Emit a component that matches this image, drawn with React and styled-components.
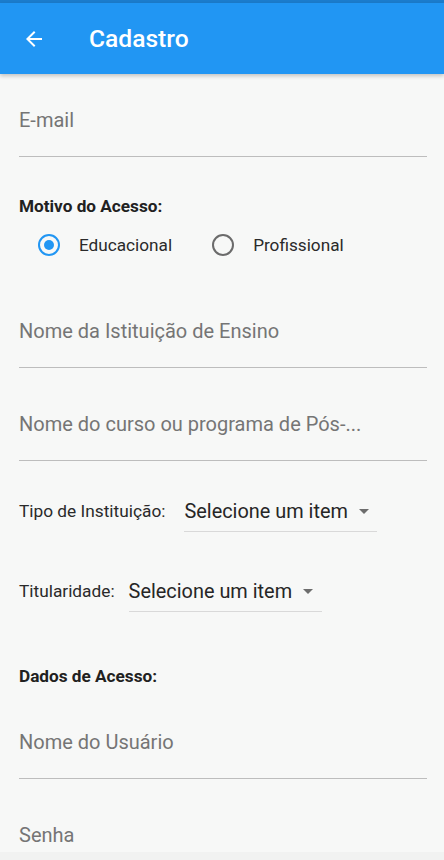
import React, { useState } from "react";
import styled, { createGlobalStyle } from "styled-components";

const GlobalStyle = createGlobalStyle`
  html, body {
    margin: 0;
    padding: 0;
    background: #f7f8f7;
    font-family: Roboto, "Noto Sans", sans-serif;
  }
`;

const Screen = styled.div`
  width: 444px;
  height: 860px;
  overflow: hidden;
  display: flex;
  flex-direction: column;
  background: #f7f8f7;
  position: relative;
`;

const StatusStrip = styled.div`
  height: 3px;
  flex-shrink: 0;
  background: #1b7ccc;
`;

const AppBar = styled.header`
  height: 71px;
  flex-shrink: 0;
  background: #2196f3;
  display: flex;
  align-items: center;
  padding-left: 22px;
  gap: 43px;
  box-shadow: 0 2px 4px rgba(0, 0, 0, 0.22);
  position: relative;
  z-index: 1;
`;

const Title = styled.h1`
  margin: 0;
  color: #ffffff;
  font-size: 24.6px;
  font-weight: 500;
`;

const Form = styled.div`
  flex: 1;
  padding: 0 17px 0 19px;
  display: flex;
  flex-direction: column;
`;

const Field = styled.div`
  height: ${(p) => p.h || 82}px;
  flex-shrink: 0;
  display: flex;
  flex-direction: column;
  justify-content: flex-end;
`;

const Placeholder = styled.div`
  font-size: 20px;
  color: #757575;
  line-height: 24px;
  padding-bottom: 24px;
  border-bottom: 1.5px solid #bdbdbd;
  white-space: nowrap;
`;

const SectionLabel = styled.div`
  font-size: 17.2px;
  font-weight: 700;
  color: #212121;
  margin-top: ${(p) => p.mt}px;
  line-height: 20px;
  flex-shrink: 0;
`;

const RadioRow = styled.div`
  display: flex;
  align-items: center;
  height: 22px;
  margin-top: 18px;
  padding-left: 19px;
  flex-shrink: 0;
`;

const RadioOption = styled.label`
  display: flex;
  align-items: center;
  gap: 19px;
  margin-right: 40px;
  font-size: 17.2px;
  color: #2a2a2a;
  cursor: pointer;
`;

const RadioCircle = styled.span`
  width: 18px;
  height: 18px;
  border-radius: 50%;
  border: 2px solid ${(p) => (p.checked ? "#2196f3" : "#6b6b6b")};
  display: flex;
  align-items: center;
  justify-content: center;

  &::after {
    content: "";
    width: 10px;
    height: 10px;
    border-radius: 50%;
    background: ${(p) => (p.checked ? "#2196f3" : "transparent")};
  }
`;

const SelectRow = styled.div`
  display: flex;
  align-items: flex-start;
  margin-top: ${(p) => p.mt}px;
  flex-shrink: 0;
`;

const SelectLabel = styled.span`
  font-size: 17.3px;
  line-height: 24px;
  color: #2a2a2a;
  margin-right: ${(p) => p.gap}px;
`;

const Dropdown = styled.div`
  display: flex;
  align-items: center;
  width: ${(p) => p.w}px;
  height: 24px;
  padding-bottom: 8px;
  border-bottom: 1px solid #d9d9d9;
  font-size: 19.9px;
  color: #262626;
  box-sizing: content-box;
`;

const Caret = styled.span`
  margin-left: 11px;
  width: 0;
  height: 0;
  border-left: 5px solid transparent;
  border-right: 5px solid transparent;
  border-top: 5px solid #6d6d6d;
`;

const BottomStrip = styled.div`
  position: absolute;
  left: 0;
  right: 0;
  bottom: 0;
  height: 8px;
  background: #f1f2f1;
`;

const BackArrow = () => (
  <svg width="24" height="24" viewBox="0 0 24 24">
    <path
      d="M20 11H7.83l5.59-5.59L12 4l-8 8 8 8 1.41-1.41L7.83 13H20v-2z"
      fill="#ffffff"
    />
  </svg>
);

const App = () => {
  const [motivo, setMotivo] = useState("edu");
  return (
    <Screen>
      <GlobalStyle />
      <StatusStrip />
      <AppBar>
        <BackArrow />
        <Title>Cadastro</Title>
      </AppBar>
      <Form>
        <Field h={83}>
          <Placeholder>E-mail</Placeholder>
        </Field>
        <SectionLabel mt={39}>Motivo do Acesso:</SectionLabel>
        <RadioRow>
          <RadioOption onClick={() => setMotivo("edu")}>
            <RadioCircle checked={motivo === "edu"} />
            Educacional
          </RadioOption>
          <RadioOption onClick={() => setMotivo("pro")}>
            <RadioCircle checked={motivo === "pro"} />
            Profissional
          </RadioOption>
        </RadioRow>
        <Field h={112}>
          <Placeholder>Nome da Istituição de Ensino</Placeholder>
        </Field>
        <Field h={93}>
          <Placeholder>Nome do curso ou programa de Pós-...</Placeholder>
        </Field>
        <SelectRow mt={38}>
          <SelectLabel gap={19}>Tipo de Instituição:</SelectLabel>
          <Dropdown w={193}>
            Selecione um item
            <Caret />
          </Dropdown>
        </SelectRow>
        <SelectRow mt={47}>
          <SelectLabel gap={14}>Titularidade:</SelectLabel>
          <Dropdown w={193}>
            Selecione um item
            <Caret />
          </Dropdown>
        </SelectRow>
        <SectionLabel mt={54}>Dados de Acesso:</SectionLabel>
        <Field h={93}>
          <Placeholder>Nome do Usuário</Placeholder>
        </Field>
        <Field h={93}>
          <Placeholder>Senha</Placeholder>
        </Field>
      </Form>
      <BottomStrip />
    </Screen>
  );
};

export default App;
